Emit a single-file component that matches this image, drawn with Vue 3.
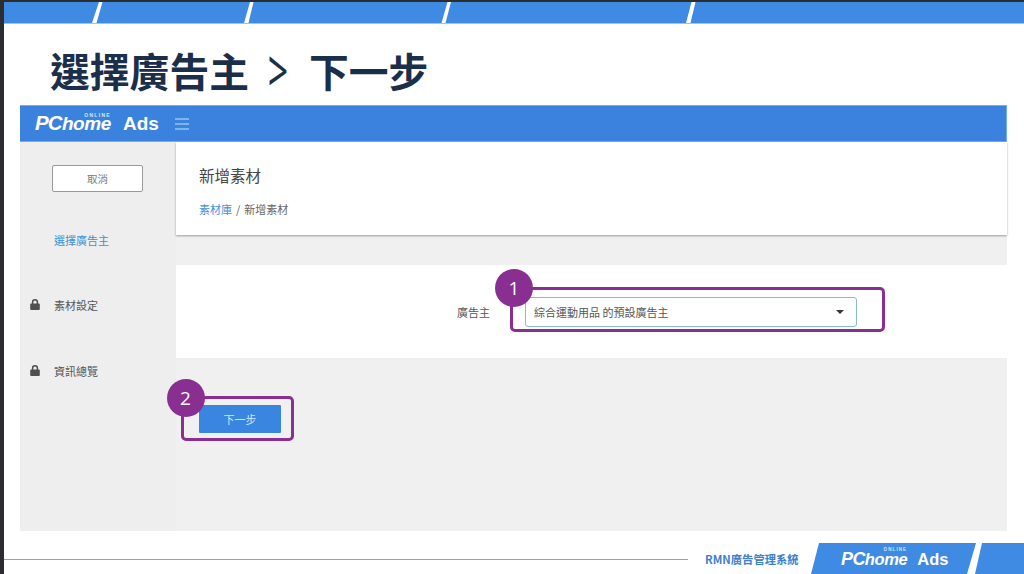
<script setup>
const slashes = [
  '99,0 102.5,0 96.5,21 92,21',
  '250,0 253.5,0 248.5,21 244,21',
  '447.5,0 451,0 445.5,21 441.5,21',
  '691.5,0 695.5,0 690.5,21 686,21'
]
const steps = [
  { label: '選擇廣告主', active: true, locked: false },
  { label: '素材設定', active: false, locked: true },
  { label: '資訊總覽', active: false, locked: true }
]
const marks = [
  { n: 1, box: 'box-one', dot: 'dot-one' },
  { n: 2, box: 'box-two', dot: 'dot-two' }
]
</script>

<template>
  <div class="slide">
    <svg class="strip" width="1020" height="22" viewBox="0 0 1020 22">
      <rect width="1020" height="21" fill="#3f8ae2" />
      <rect y="21" width="1020" height="1" fill="#8ec8f3" />
      <polygon v-for="s in slashes" :key="s" :points="s" transform="translate(-4 0)" fill="#fff" />
    </svg>

    <h1 class="title">選擇廣告主<span class="chev"><span class="chev-glyph">&gt;</span></span>下一步</h1>

    <div class="frame">
      <header class="bar">
        <span class="logo">
          <span class="pc">PC</span><span class="home">home<span class="online">ONLINE</span></span>
          <span class="ads">Ads</span>
        </span>
        <span class="burger"><i></i><i></i><i></i></span>
      </header>

      <div class="body">
        <aside class="side">
          <button class="cancel">取消</button>
          <nav class="steps">
            <div v-for="s in steps" :key="s.label" class="step" :class="{ active: s.active }">
              <svg v-if="s.locked" class="lock" width="10" height="11" viewBox="0 0 10 11">
                <path d="M2.6 5V3.2a2.4 2.4 0 0 1 4.8 0V5" fill="none" stroke="#4f4f4f" stroke-width="1.5" />
                <rect x="0.2" y="4.6" width="9.6" height="6.4" rx="1" fill="#4f4f4f" />
              </svg>
              <span class="step-label">{{ s.label }}</span>
            </div>
          </nav>
        </aside>

        <main class="main">
          <section class="head">
            <h2 class="head-title">新增素材</h2>
            <p class="crumb"><a class="crumb-link">素材庫</a> / 新增素材</p>
          </section>
          <section class="panel">
            <label class="field-label">廣告主</label>
            <div class="select">
              <span>綜合運動用品 的預設廣告主</span>
              <i class="caret"></i>
            </div>
          </section>
          <button class="next">下一步</button>
        </main>
      </div>
    </div>

    <footer class="foot">
      <div class="rule"></div>
      <span class="sys">RMN廣告管理系統</span>
      <div class="tab">
        <span class="logo small">
          <span class="pc">PC</span><span class="home">home<span class="online">ONLINE</span></span>
          <span class="ads">Ads</span>
        </span>
      </div>
      <div class="tab-end"></div>
    </footer>

    <template v-for="m in marks" :key="m.n">
      <div class="box" :class="m.box"></div>
      <div class="dot" :class="m.dot">{{ m.n }}</div>
    </template>
  </div>
</template>

<style>
html, body { margin: 0; background: #fff; }
</style>

<style scoped>
.slide {
  position: relative;
  box-sizing: border-box;
  width: 1024px;
  height: 574px;
  overflow: hidden;
  background: #fff;
  border-top: 2px solid #2b2d30;
  border-left: 4px solid #2b2d30;
  font-family: "Noto Sans CJK TC", "Noto Sans", sans-serif;
  display: flex;
  flex-direction: column;
}
.strip { display: block; flex: none; }
.title {
  margin: 15px 0 5px 46px;
  height: 61px;
  font-size: 39.8px;
  line-height: 56px;
  font-weight: 700;
  color: #1b2f4b;
  white-space: nowrap;
  display: flex;
  align-items: center;
}
.chev {
  font-family: "Noto Sans", sans-serif;
  font-weight: 400;
  font-size: 42px;
  width: 60px;
  margin-left: 0;
  text-align: center;
  transform: translateX(-1px);
}
.chev-glyph {
  display: inline-block;
  transform: scale(0.85, 1.4);
}
.frame {
  margin-left: 16px;
  width: 987px;
  height: 426px;
  display: flex;
  flex-direction: column;
  flex: none;
}
.bar {
  height: 37px;
  box-sizing: border-box;
  background: #3a82de;
  border: 1px solid #6fb0ec;
  border-left: 0;
  display: flex;
  align-items: center;
  padding-left: 15px;
  flex: none;
}
.logo {
  color: #fff;
  font-family: "Liberation Sans", sans-serif;
  font-weight: 700;
  font-size: 19px;
  line-height: 20px;
  display: inline-flex;
  align-items: baseline;
  white-space: nowrap;
}
.pc { font-style: italic; font-size: 20.5px; letter-spacing: -0.8px; }
.home {
  position: relative;
  font-style: italic;
  letter-spacing: -0.4px;
}
.online {
  position: absolute;
  right: 0;
  top: -2px;
  font-size: 5px;
  line-height: 6px;
  letter-spacing: 1.3px;
  font-style: normal;
  color: #d5e6fa;
}
.ads { margin-left: 12px; font-size: 19px; }
.burger {
  margin-left: 16px;
  width: 14px;
  display: flex;
  flex-direction: column;
  gap: 3px;
}
.burger i { display: block; height: 2px; background: #7fb4ef; }
.body { flex: 1; display: flex; min-height: 0; }
.side {
  width: 156px;
  flex: none;
  background: #eee;
  display: flex;
  flex-direction: column;
  align-items: flex-start;
  padding: 23px 0 0 32px;
  box-sizing: border-box;
}
.cancel {
  width: 91px;
  height: 27px;
  padding: 0;
  box-sizing: border-box;
  border: 1.5px solid #999;
  border-radius: 2px;
  background: #fff;
  color: #7c7c7c;
  font-family: inherit;
  font-size: 10.5px;
}
.steps {
  margin: 37.5px 0 0 -32px;
  display: flex;
  flex-direction: column;
  gap: 45.5px;
  width: 156px;
}
.step {
  position: relative;
  height: 20px;
  padding-left: 34px;
  display: flex;
  align-items: center;
  font-size: 11px;
  color: #555;
}
.step.active .step-label { color: #3f8fd9; }
.lock { position: absolute; left: 10px; top: 4px; }
.main {
  flex: 1;
  min-width: 0;
  background: #f0f0f0;
  display: flex;
  flex-direction: column;
  align-items: flex-start;
}
.head {
  align-self: stretch;
  height: 93px;
  box-sizing: border-box;
  background: #fff;
  padding: 23px 0 0 23px;
  box-shadow: 0 1px 2px rgba(0, 0, 0, 0.35);
}
.head-title {
  margin: 0;
  font-size: 15.5px;
  line-height: 20px;
  font-weight: 400;
  color: #444;
}
.crumb {
  margin: 14px 0 0;
  font-size: 11px;
  line-height: 20px;
  word-spacing: 1.5px;
  color: #666;
}
.crumb-link { color: #3f8fd9; }
.panel {
  align-self: stretch;
  margin-top: 30px;
  height: 93px;
  background: #fff;
  display: flex;
  align-items: center;
  padding-left: 281px;
}
.field-label {
  width: 33px;
  margin-right: 35px;
  font-size: 11px;
  color: #555;
  white-space: nowrap;
}
.select {
  width: 332px;
  height: 30px;
  box-sizing: border-box;
  border: 1px solid #84bcd6;
  border-radius: 3px;
  background: #fff;
  padding: 0 12px 0 8px;
  display: flex;
  align-items: center;
  justify-content: space-between;
  font-size: 11px;
  color: #555;
}
.caret {
  width: 0;
  height: 0;
  border-left: 4px solid transparent;
  border-right: 4px solid transparent;
  border-top: 4px solid #333;
}
.next {
  margin: 47px 0 0 23px;
  width: 82px;
  height: 28px;
  padding: 0;
  border: 0;
  border-radius: 1px;
  background: #3a85e0;
  color: #d5e6fa;
  font-family: inherit;
  font-size: 11px;
}
.foot {
  margin-top: 12px;
  height: 31px;
  flex: none;
  display: flex;
  align-items: center;
}
.rule {
  width: 684px;
  height: 1px;
  margin-top: 2px;
  background: #7fa8da;
}
.sys {
  margin-left: 17px;
  width: 107px;
  font-size: 11.3px;
  font-weight: 700;
  color: #3f80cc;
  white-space: nowrap;
}
.tab {
  width: 165px;
  height: 31px;
  margin-left: -1px;
  background: #3f8ae2;
  clip-path: polygon(8px 0, 100% 0, 156px 100%, 0 100%);
  display: flex;
  align-items: center;
  padding: 1px 0 0 30px;
  box-sizing: border-box;
}
.logo.small { font-size: 16.5px; }
.logo.small .pc { font-size: 18px; letter-spacing: -0.6px; }
.logo.small .online { font-size: 4.5px; letter-spacing: 1.1px; }
.logo.small .ads { font-size: 16.5px; margin-left: 10px; }
.tab-end {
  flex: 1;
  height: 31px;
  margin-left: -1px;
  background: #3f8ae2;
  clip-path: polygon(7px 0, 100% 0, 100% 100%, 0 100%);
}
.box {
  position: absolute;
  box-sizing: border-box;
  border: 3px solid #8a2f92;
  border-radius: 5px;
}
.box-one { left: 506px; top: 285px; width: 375px; height: 45px; }
.box-two { left: 177px; top: 394px; width: 113px; height: 45px; }
.dot {
  position: absolute;
  width: 38px;
  height: 38px;
  border-radius: 50%;
  background: #8a2f92;
  color: #fff;
  font-family: "Open Sans", sans-serif;
  font-size: 19px;
  line-height: 38px;
  text-align: center;
}
.dot-one { left: 491px; top: 267px; }
.dot-two { left: 162.5px; top: 377px; }
</style>
